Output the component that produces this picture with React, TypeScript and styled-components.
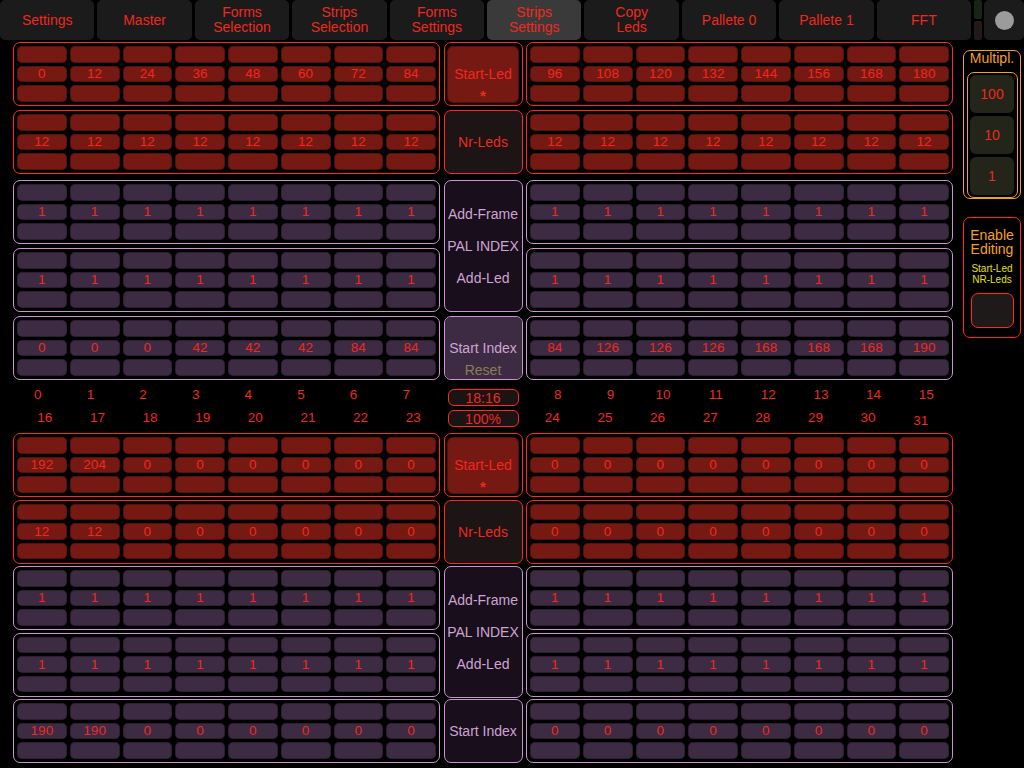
import styled, { createGlobalStyle } from 'styled-components';

const RED = '#f0281e';
const RED_LINE = '#ff2a1e';
const RED_CELL = '#771913';
const PURPLE_LINE = '#c894cc';
const PURPLE_TEXT = '#cfa4d3';
const PURPLE_CELL = '#3d2b44';
const ORANGE = '#f4a21c';

const GlobalStyle = createGlobalStyle`
  html, body {
    margin: 0;
    padding: 0;
    background: #000;
  }
  body {
    font-family: "Liberation Sans", Arial, sans-serif;
    color: ${RED};
  }
  #root {
    width: 1024px;
    height: 768px;
    overflow: hidden;
  }
`;

/* Top tab bar */
const TopBar = styled.div`
  display: flex;
  gap: 3px;
  height: 40px;
`;

const Tab = styled.div<{ $active?: boolean }>`
  flex: 1;
  display: flex;
  align-items: center;
  justify-content: center;
  text-align: center;
  background: ${p => (p.$active ? '#3a3a3a' : '#1b1b1b')};
  border-radius: 5px;
  font-size: 14px;
  line-height: 15px;
  color: ${RED};
`;

const StatusBars = styled.div`
  width: 8px;
  display: flex;
  flex-direction: column;
  gap: 2px;
`;

const StatusBar = styled.span<{ $color: string }>`
  flex: 1;
  background: ${p => p.$color};
  border-radius: 2px;
`;

const DotButton = styled.div`
  width: 40px;
  margin-left: -1px;
  background: #1b1b1b;
  border-radius: 5px;
  display: flex;
  align-items: center;
  justify-content: center;

  &::after {
    content: '';
    width: 19px;
    height: 19px;
    border-radius: 50%;
    background: #9b9b9b;
  }
`;

/* Main area */
const Main = styled.div`
  display: flex;
  padding: 2px 0 0 13px;
`;

const Board = styled.div`
  width: 940px;
  display: flex;
  flex-direction: column;
`;

const Half = styled.div<{ $top?: boolean }>`
  display: grid;
  grid-template-columns: 427px 79px 427px;
  grid-template-rows: ${p => (p.$top ? '64px 66px 64px 64px 64px' : 'repeat(5, 64px)')};
  column-gap: 3.5px;
  row-gap: ${p => (p.$top ? '4px' : '2.5px')};
  align-items: start;
`;

const Panel = styled.div<{ $tone: 'red' | 'purple' }>`
  box-sizing: border-box;
  height: 64px;
  border: 1.5px solid ${p => (p.$tone === 'red' ? RED_LINE : PURPLE_LINE)};
  border-radius: 7px;
  padding: 3px;
  display: grid;
  grid-template-columns: repeat(8, 1fr);
  grid-template-rows: repeat(3, 1fr);
  gap: 3px;
`;

const Cell = styled.div<{ $tone: 'red' | 'purple' }>`
  background: ${p => (p.$tone === 'red' ? RED_CELL : PURPLE_CELL)};
  box-shadow: inset 0 0 0 1px rgba(0, 0, 0, 0.28);
  border-radius: 5px;
  display: flex;
  align-items: center;
  justify-content: center;
  font-size: 13.5px;
  color: ${RED};
`;

const CenterBox = styled.div<{ $tone: 'red' | 'purple'; $fill: string; $tall?: boolean; $inset?: boolean }>`
  box-sizing: border-box;
  grid-column: 2;
  grid-row: ${p => (p.$tall ? 'span 2' : 'auto')};
  height: ${p => (p.$tall ? '132px' : '64px')};
  border: 1.5px solid ${p => (p.$tone === 'red' ? RED_LINE : PURPLE_LINE)};
  border-radius: 7px;
  padding: ${p => (p.$inset ? '2.5px' : '0')};
  background: ${p => (p.$inset ? '#000' : p.$fill)};
  display: flex;
  flex-direction: column;
  align-items: center;
  justify-content: center;
  gap: 16px;
  font-size: 14px;
  color: ${p => (p.$tone === 'red' ? RED : PURPLE_TEXT)};
`;

const InsetFill = styled.div<{ $fill: string }>`
  align-self: stretch;
  flex: 1;
  border-radius: 6px;
  background: ${p => p.$fill};
  box-shadow: inset 0 0 0 1px rgba(0, 0, 0, 0.35);
  display: grid;
  grid-template-rows: 1fr auto 1fr;
  justify-items: center;
`;

const Stacked = styled.div<{ $fill: string }>`
  align-self: stretch;
  flex: 1;
  border-radius: 6px;
  background: ${p => p.$fill};
  display: grid;
  grid-template-rows: 1fr auto 1fr;
  justify-items: center;
`;

const Label = styled.span`
  grid-row: 2;
  line-height: 16px;
`;

const Sub = styled.span<{ $color: string }>`
  grid-row: 3;
  align-self: center;
  color: ${p => p.$color};
  font-size: 14px;
  line-height: 14px;
  padding-top: 4px;
`;

const Star = styled.span`
  grid-row: 3;
  align-self: center;
  font-size: 15px;
  font-weight: bold;
  line-height: 10px;
  padding-top: 8px;
  color: ${RED};
`;

/* Index labels between halves */
const Labels = styled.div`
  height: 53px;
  display: grid;
  grid-template-columns: 427px 79px 427px;
  column-gap: 3.5px;
`;

const NumberBlock = styled.div`
  padding-top: 3px;
  display: flex;
  flex-direction: column;
`;

const NumRow = styled.div<{ $shift: number }>`
  display: grid;
  grid-template-columns: repeat(8, 1fr);
  gap: 3px;
  height: 23px;
  align-items: center;
  padding-left: ${p => 4.5 + p.$shift}px;
  padding-right: ${p => 4.5 - p.$shift}px;
  font-size: 13.5px;
  color: ${RED};
  text-align: center;
`;

const Num = styled.span<{ $drop?: boolean }>`
  padding-top: ${p => (p.$drop ? '6px' : '0')};
`;

const ClockStack = styled.div`
  padding: 9px 4px 0 4px;
  display: flex;
  flex-direction: column;
  gap: 4px;
`;

const Readout = styled.div`
  box-sizing: border-box;
  height: 17px;
  border: 1.5px solid ${RED_LINE};
  border-radius: 6px;
  background: #1c1414;
  display: flex;
  align-items: center;
  justify-content: center;
  font-size: 14px;
  color: ${RED};
`;

/* Right side controls */
const Sidebar = styled.div`
  width: 58px;
  margin-left: 10px;
  padding-top: 8px;
  display: flex;
  flex-direction: column;
  gap: 18px;
`;

const MultPanel = styled.div`
  box-sizing: border-box;
  height: 149px;
  border: 1.5px solid ${ORANGE};
  border-radius: 7px;
  padding: 0 2.5px;
  display: flex;
  flex-direction: column;
  align-items: stretch;
`;

const MultTitle = styled.div`
  text-align: center;
  font-size: 14px;
  line-height: 14px;
  color: ${ORANGE};
  margin-bottom: 6.5px;
`;

const MultInner = styled.div`
  flex: 1;
  margin-bottom: 0.5px;
  border: 1.5px solid ${ORANGE};
  border-radius: 7px;
  padding: 2px 2.5px;
  display: flex;
  flex-direction: column;
  gap: 3px;
`;

const MultButton = styled.div`
  flex: 1;
  background: #23241a;
  border-radius: 6px;
  display: flex;
  align-items: center;
  justify-content: center;
  font-size: 14px;
  color: ${RED};
`;

const EditPanel = styled.div`
  box-sizing: border-box;
  height: 121px;
  border: 1.5px solid ${RED_LINE};
  border-radius: 7px;
  padding-top: 9.5px;
  display: flex;
  flex-direction: column;
  align-items: center;
`;

const EditTitle = styled.div`
  text-align: center;
  font-size: 14px;
  line-height: 14px;
  color: ${ORANGE};
`;

const EditSub = styled.div`
  margin-top: 7px;
  text-align: center;
  font-size: 10px;
  line-height: 11px;
  color: #e6e000;
`;

const EditToggle = styled.div`
  box-sizing: border-box;
  margin-top: 8px;
  width: 43px;
  height: 35px;
  border: 1.5px solid ${RED_LINE};
  border-radius: 7px;
  background: #1e1a1a;
`;

type Tone = 'red' | 'purple';

const ValuePanel = ({ tone, values }: { tone: Tone; values: (string | number)[] }) => (
  <Panel $tone={tone}>
    {values.map((_, i) => <Cell key={'a' + i} $tone={tone} />)}
    {values.map((v, i) => <Cell key={'b' + i} $tone={tone}>{v}</Cell>)}
    {values.map((_, i) => <Cell key={'c' + i} $tone={tone} />)}
  </Panel>
);

const tabs = [
  'Settings', 'Master', 'Forms\nSelection', 'Strips\nSelection', 'Forms\nSettings',
  'Strips\nSettings', 'Copy\nLeds', 'Pallete 0', 'Pallete 1', 'FFT',
];

const ones = Array(8).fill(1);
const twelves = Array(8).fill(12);
const zeros = Array(8).fill(0);

const range = (from: number) => Array.from({ length: 8 }, (_, i) => from + i);

type HalfData = {
  startLed: [number[], number[]];
  nrLeds: [number[], number[]];
  startIndex: [number[], number[]];
};

const top: HalfData = {
  startLed: [[0, 12, 24, 36, 48, 60, 72, 84], [96, 108, 120, 132, 144, 156, 168, 180]],
  nrLeds: [twelves, twelves],
  startIndex: [[0, 0, 0, 42, 42, 42, 84, 84], [84, 126, 126, 126, 168, 168, 168, 190]],
};

const bottom: HalfData = {
  startLed: [[192, 204, 0, 0, 0, 0, 0, 0], zeros],
  nrLeds: [[12, 12, 0, 0, 0, 0, 0, 0], zeros],
  startIndex: [[190, 190, 0, 0, 0, 0, 0, 0], zeros],
};

const StripHalf = ({ data, isTop }: { data: HalfData; isTop?: boolean }) => (
  <Half $top={isTop}>
    <ValuePanel tone="red" values={data.startLed[0]} />
    <CenterBox $tone="red" $fill={RED_CELL} $inset>
      <InsetFill $fill={RED_CELL}>
        <Label>Start-Led</Label>
        <Star>*</Star>
      </InsetFill>
    </CenterBox>
    <ValuePanel tone="red" values={data.startLed[1]} />

    <ValuePanel tone="red" values={data.nrLeds[0]} />
    <CenterBox $tone="red" $fill="#1d1416">Nr-Leds</CenterBox>
    <ValuePanel tone="red" values={data.nrLeds[1]} />

    <ValuePanel tone="purple" values={ones} />
    <CenterBox $tone="purple" $fill="#190e1b" $tall>
      <span>Add-Frame</span>
      <span>PAL INDEX</span>
      <span>Add-Led</span>
    </CenterBox>
    <ValuePanel tone="purple" values={ones} />

    <ValuePanel tone="purple" values={ones} />
    <ValuePanel tone="purple" values={ones} />

    <ValuePanel tone="purple" values={data.startIndex[0]} />
    {isTop ? (
      <CenterBox $tone="purple" $fill={PURPLE_CELL}>
        <Stacked $fill={PURPLE_CELL}>
          <Label>Start Index</Label>
          <Sub $color="#8b7b58">Reset</Sub>
        </Stacked>
      </CenterBox>
    ) : (
      <CenterBox $tone="purple" $fill="#190e1b">Start Index</CenterBox>
    )}
    <ValuePanel tone="purple" values={data.startIndex[1]} />
  </Half>
);

export default function App() {
  return (
    <>
      <GlobalStyle />
      <TopBar>
        {tabs.map(t => (
          <Tab key={t} $active={t === 'Strips\nSettings'}>
            <span>
              {t.split('\n').map((line, i) => (
                <div key={i}>{line}</div>
              ))}
            </span>
          </Tab>
        ))}
        <StatusBars>
          <StatusBar $color="#182418" />
          <StatusBar $color="#241818" />
        </StatusBars>
        <DotButton />
      </TopBar>

      <Main>
        <Board>
          <StripHalf data={top} isTop />

          <Labels>
            <NumberBlock>
              <NumRow $shift={-4.5}>{range(0).map(n => <Num key={n}>{n}</Num>)}</NumRow>
              <NumRow $shift={2.5}>{range(16).map(n => <Num key={n}>{n}</Num>)}</NumRow>
            </NumberBlock>
            <ClockStack>
              <Readout>18:16</Readout>
              <Readout>100%</Readout>
            </ClockStack>
            <NumberBlock>
              <NumRow $shift={2.5}>{range(8).map(n => <Num key={n}>{n}</Num>)}</NumRow>
              <NumRow $shift={-3}>
                {range(24).map(n => <Num key={n} $drop={n === 31}>{n}</Num>)}
              </NumRow>
            </NumberBlock>
          </Labels>

          <StripHalf data={bottom} />
        </Board>

        <Sidebar>
          <MultPanel>
            <MultTitle>Multipl.</MultTitle>
            <MultInner>
              <MultButton>100</MultButton>
              <MultButton>10</MultButton>
              <MultButton>1</MultButton>
            </MultInner>
          </MultPanel>
          <EditPanel>
            <EditTitle>Enable<br />Editing</EditTitle>
            <EditSub>Start-Led<br />NR-Leds</EditSub>
            <EditToggle />
          </EditPanel>
        </Sidebar>
      </Main>
    </>
  );
}
